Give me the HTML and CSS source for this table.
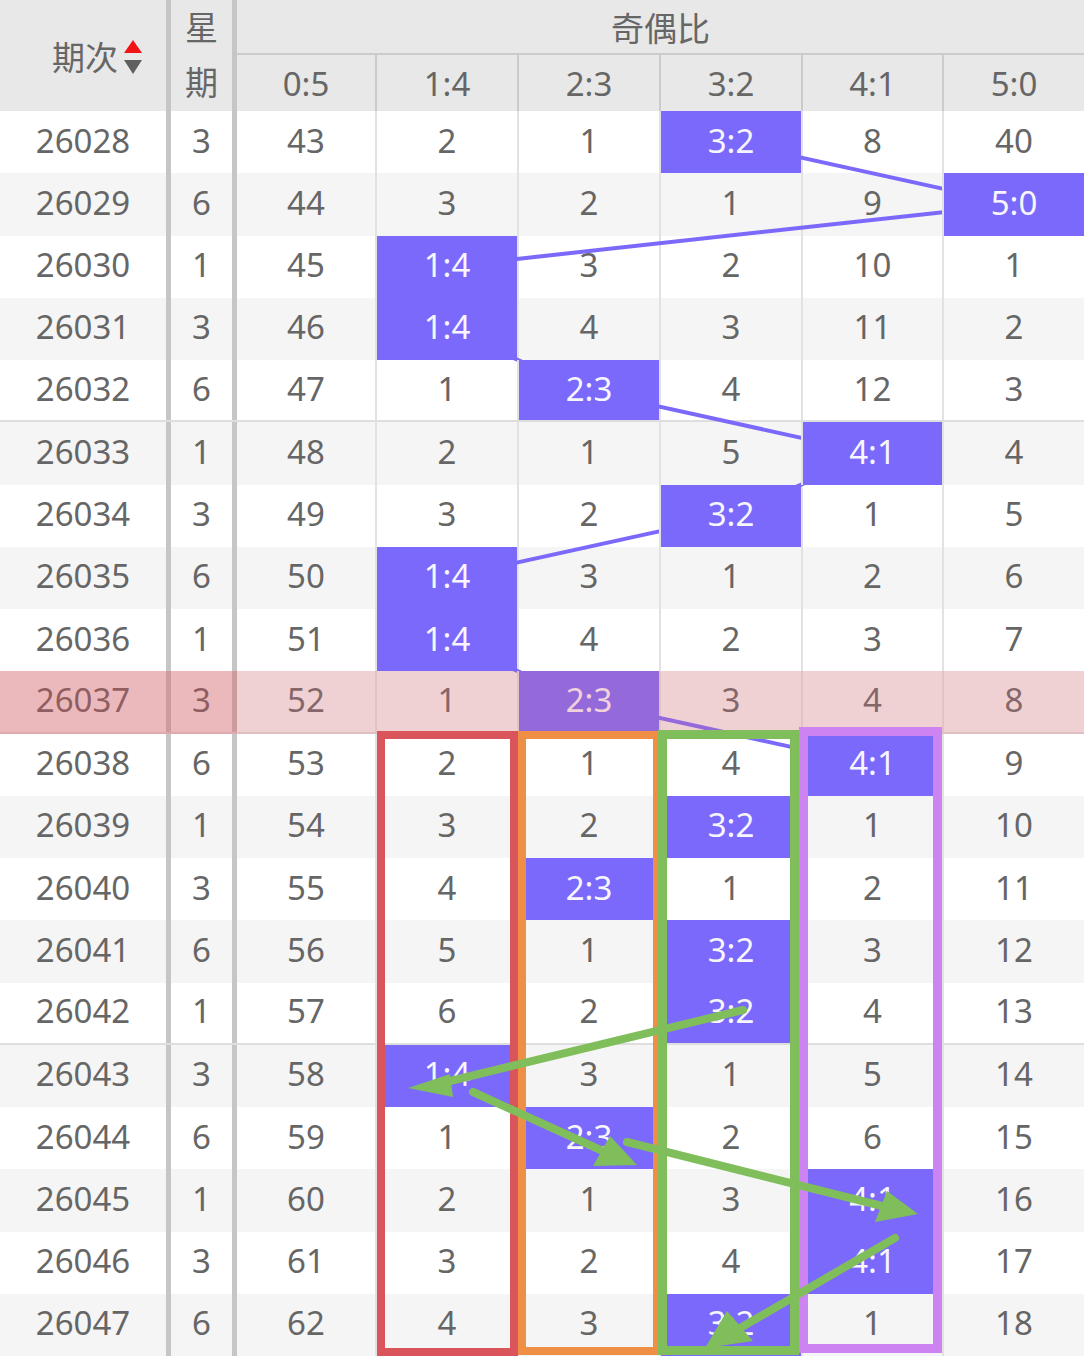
FILE: index.html
```html
<!DOCTYPE html>
<html lang="zh">
<head>
<meta charset="utf-8">
<title>奇偶比走势</title>
<link rel="stylesheet" href="styles.css">
</head>
<body>
<div class="board">
  <div class="head">
    <div class="h-issue"><span>期次</span><svg class="sort" width="18" height="34" viewBox="0 0 18 34"><polygon points="9,0 0,13 18,13" fill="#f01414"/><polygon points="0,20 18,20 9,34" fill="#5f5f5f"/></svg></div>
    <div class="h-week">星期</div>
    <div class="h-group">奇偶比</div>
    <div class="h-sub first">0:5</div>
    <div class="h-sub">1:4</div>
    <div class="h-sub">2:3</div>
    <div class="h-sub">3:2</div>
    <div class="h-sub">4:1</div>
    <div class="h-sub">5:0</div>
  </div>
  <div class="body">
    <div class="row"><div class="c issue">26028</div><div class="c week">3</div><div class="c first">43</div><div class="c">2</div><div class="c">1</div><div class="c on">3:2</div><div class="c">8</div><div class="c">40</div></div>
    <div class="row"><div class="c issue">26029</div><div class="c week">6</div><div class="c first">44</div><div class="c">3</div><div class="c">2</div><div class="c">1</div><div class="c">9</div><div class="c on">5:0</div></div>
    <div class="row"><div class="c issue">26030</div><div class="c week">1</div><div class="c first">45</div><div class="c on">1:4</div><div class="c">3</div><div class="c">2</div><div class="c">10</div><div class="c">1</div></div>
    <div class="row"><div class="c issue">26031</div><div class="c week">3</div><div class="c first">46</div><div class="c on">1:4</div><div class="c">4</div><div class="c">3</div><div class="c">11</div><div class="c">2</div></div>
    <div class="row sep"><div class="c issue">26032</div><div class="c week">6</div><div class="c first">47</div><div class="c">1</div><div class="c on">2:3</div><div class="c">4</div><div class="c">12</div><div class="c">3</div></div>
    <div class="row"><div class="c issue">26033</div><div class="c week">1</div><div class="c first">48</div><div class="c">2</div><div class="c">1</div><div class="c">5</div><div class="c on">4:1</div><div class="c">4</div></div>
    <div class="row"><div class="c issue">26034</div><div class="c week">3</div><div class="c first">49</div><div class="c">3</div><div class="c">2</div><div class="c on">3:2</div><div class="c">1</div><div class="c">5</div></div>
    <div class="row"><div class="c issue">26035</div><div class="c week">6</div><div class="c first">50</div><div class="c on">1:4</div><div class="c">3</div><div class="c">1</div><div class="c">2</div><div class="c">6</div></div>
    <div class="row"><div class="c issue">26036</div><div class="c week">1</div><div class="c first">51</div><div class="c on">1:4</div><div class="c">4</div><div class="c">2</div><div class="c">3</div><div class="c">7</div></div>
    <div class="row sep hot"><div class="c issue">26037</div><div class="c week">3</div><div class="c first">52</div><div class="c">1</div><div class="c on">2:3</div><div class="c">3</div><div class="c">4</div><div class="c">8</div></div>
    <div class="row"><div class="c issue">26038</div><div class="c week">6</div><div class="c first">53</div><div class="c">2</div><div class="c">1</div><div class="c">4</div><div class="c on">4:1</div><div class="c">9</div></div>
    <div class="row"><div class="c issue">26039</div><div class="c week">1</div><div class="c first">54</div><div class="c">3</div><div class="c">2</div><div class="c on">3:2</div><div class="c">1</div><div class="c">10</div></div>
    <div class="row"><div class="c issue">26040</div><div class="c week">3</div><div class="c first">55</div><div class="c">4</div><div class="c on">2:3</div><div class="c">1</div><div class="c">2</div><div class="c">11</div></div>
    <div class="row"><div class="c issue">26041</div><div class="c week">6</div><div class="c first">56</div><div class="c">5</div><div class="c">1</div><div class="c on">3:2</div><div class="c">3</div><div class="c">12</div></div>
    <div class="row sep"><div class="c issue">26042</div><div class="c week">1</div><div class="c first">57</div><div class="c">6</div><div class="c">2</div><div class="c on">3:2</div><div class="c">4</div><div class="c">13</div></div>
    <div class="row"><div class="c issue">26043</div><div class="c week">3</div><div class="c first">58</div><div class="c on">1:4</div><div class="c">3</div><div class="c">1</div><div class="c">5</div><div class="c">14</div></div>
    <div class="row"><div class="c issue">26044</div><div class="c week">6</div><div class="c first">59</div><div class="c">1</div><div class="c on">2:3</div><div class="c">2</div><div class="c">6</div><div class="c">15</div></div>
    <div class="row"><div class="c issue">26045</div><div class="c week">1</div><div class="c first">60</div><div class="c">2</div><div class="c">1</div><div class="c">3</div><div class="c on">4:1</div><div class="c">16</div></div>
    <div class="row"><div class="c issue">26046</div><div class="c week">3</div><div class="c first">61</div><div class="c">3</div><div class="c">2</div><div class="c">4</div><div class="c on">4:1</div><div class="c">17</div></div>
    <div class="row"><div class="c issue">26047</div><div class="c week">6</div><div class="c first">62</div><div class="c">4</div><div class="c">3</div><div class="c on">3:2</div><div class="c">1</div><div class="c">18</div></div>
  </div>

  <svg class="trend" width="1084" height="1356" viewBox="0 0 1084 1356">
    <polyline fill="none" stroke="#7a69fb" stroke-width="4" stroke-linejoin="round"
      points="731,142.1 1014,204.4 447,266.6 447,328.9 589,391.1 872,453.4 731,515.6 447,577.9 447,640.1 589,702.4 872,764.6 731,826.9 589,889.1 731,951.4 731,1013.6"/>
  </svg>

  <div class="box box-red"></div>
  <div class="box box-orange"></div>
  <div class="box box-green"></div>
  <div class="box box-purple"></div>

  <svg class="arrows" width="1084" height="1356" viewBox="0 0 1084 1356">
    <g stroke="#80be5b" stroke-width="8" stroke-linecap="round" fill="none">
      <line x1="743" y1="1010" x2="446" y2="1082"/>
      <line x1="473" y1="1092" x2="605" y2="1152"/>
      <line x1="627" y1="1142" x2="882" y2="1206"/>
      <line x1="895" y1="1238" x2="735" y2="1331"/>
    </g>
    <g fill="#80be5b">
      <polygon points="408,1088 450,1074 453,1097"/>
      <polygon points="637,1165 593,1166 610,1136"/>
      <polygon points="918,1214 875,1222 887,1191"/>
      <polygon points="705,1348 753,1341 727,1311"/>
    </g>
  </svg>
</div>
</body>
</html>
```

FILE: styles.css
```css
html, body {
  margin: 0;
  padding: 0;
  background: #ffffff;
}

.board {
  position: relative;
  width: 1084px;
  height: 1356px;
  overflow: hidden;
  isolation: isolate;
  font-family: "Noto Sans", "Noto Sans CJK SC", sans-serif;
  font-size: 33px;
  color: #666666;
  background: #ffffff;
}

/* ---------- header ---------- */
.head {
  display: grid;
  grid-template-columns: 171px 66px 138px 142px 142px 142px 141px 142px;
  grid-template-rows: 55px 56px;
  background: #e8e8e8;
}

.h-issue {
  grid-row: 1 / 3;
  grid-column: 1;
  border-right: 5px solid #c6c6c6;
  display: flex;
  align-items: center;
  justify-content: center;
  padding-left: 28px;
  gap: 6px;
}

.sort {
  display: block;
  margin-top: 2px;
}

.h-week {
  grid-row: 1 / 3;
  grid-column: 2;
  border-right: 5px solid #c6c6c6;
  text-align: center;
  line-height: 55px;
}

.h-group {
  grid-row: 1;
  grid-column: 3 / 9;
  border-bottom: 2px solid #cbcbcb;
  display: flex;
  align-items: center;
  justify-content: center;
}

.h-sub {
  grid-row: 2;
  display: flex;
  align-items: center;
  justify-content: center;
  border-left: 2px solid #cbcbcb;
}

.h-sub.first {
  border-left: 0;
}

/* ---------- body ---------- */
.body {
  display: flex;
  flex-direction: column;
}

.row {
  position: relative;
  display: grid;
  grid-template-columns: 171px 66px 138px 142px 142px 142px 141px 142px;
  height: 62.25px;
  box-sizing: border-box;
  background: #ffffff;
}

.row:nth-child(even) {
  background: #f5f5f5;
}

.row.sep {
  border-bottom: 2px solid #dedede;
}

.c {
  display: flex;
  align-items: center;
  justify-content: center;
  padding-bottom: 4px;
  border-left: 2px solid #e2e2e2;
}

.c.issue,
.c.week {
  border-left: 0;
  border-right: 5px solid #c6c6c6;
}

.c.first {
  border-left: 0;
}

.c.on {
  position: relative;
  z-index: 2;
  background: #7a69fb;
  color: #f7f6ff;
}

/* highlighted (current) row */
.row.hot::before,
.row.hot::after {
  content: "";
  position: absolute;
  top: 0;
  bottom: -2px;
  z-index: 3;
  pointer-events: none;
}

.row.hot::before {
  left: 0;
  width: 237px;
  background: rgba(220, 80, 90, 0.36);
}

.row.hot::after {
  left: 237px;
  right: 0;
  background: rgba(225, 110, 120, 0.26);
}

/* ---------- trend line ---------- */
.trend {
  position: absolute;
  left: 0;
  top: 0;
  z-index: 1;
  pointer-events: none;
}

/* ---------- annotation boxes ---------- */
.box {
  position: absolute;
  box-sizing: border-box;
  z-index: 4;
  pointer-events: none;
}

.box-red {
  left: 377px;
  top: 731px;
  width: 141px;
  height: 625px;
  border: 8px solid #da545b;
}

.box-orange {
  left: 518px;
  top: 731px;
  width: 140px;
  height: 624px;
  border: 8px solid #ef8f45;
  border-right-width: 5px;
}

.box-green {
  left: 658px;
  top: 730px;
  width: 141px;
  height: 625px;
  border: 9px solid #7fbe5b;
}

.box-purple {
  left: 799px;
  top: 727px;
  width: 143px;
  height: 626px;
  border: 9px solid #cd83f2;
}

/* ---------- arrows ---------- */
.arrows {
  position: absolute;
  left: 0;
  top: 0;
  z-index: 5;
  pointer-events: none;
}
```
